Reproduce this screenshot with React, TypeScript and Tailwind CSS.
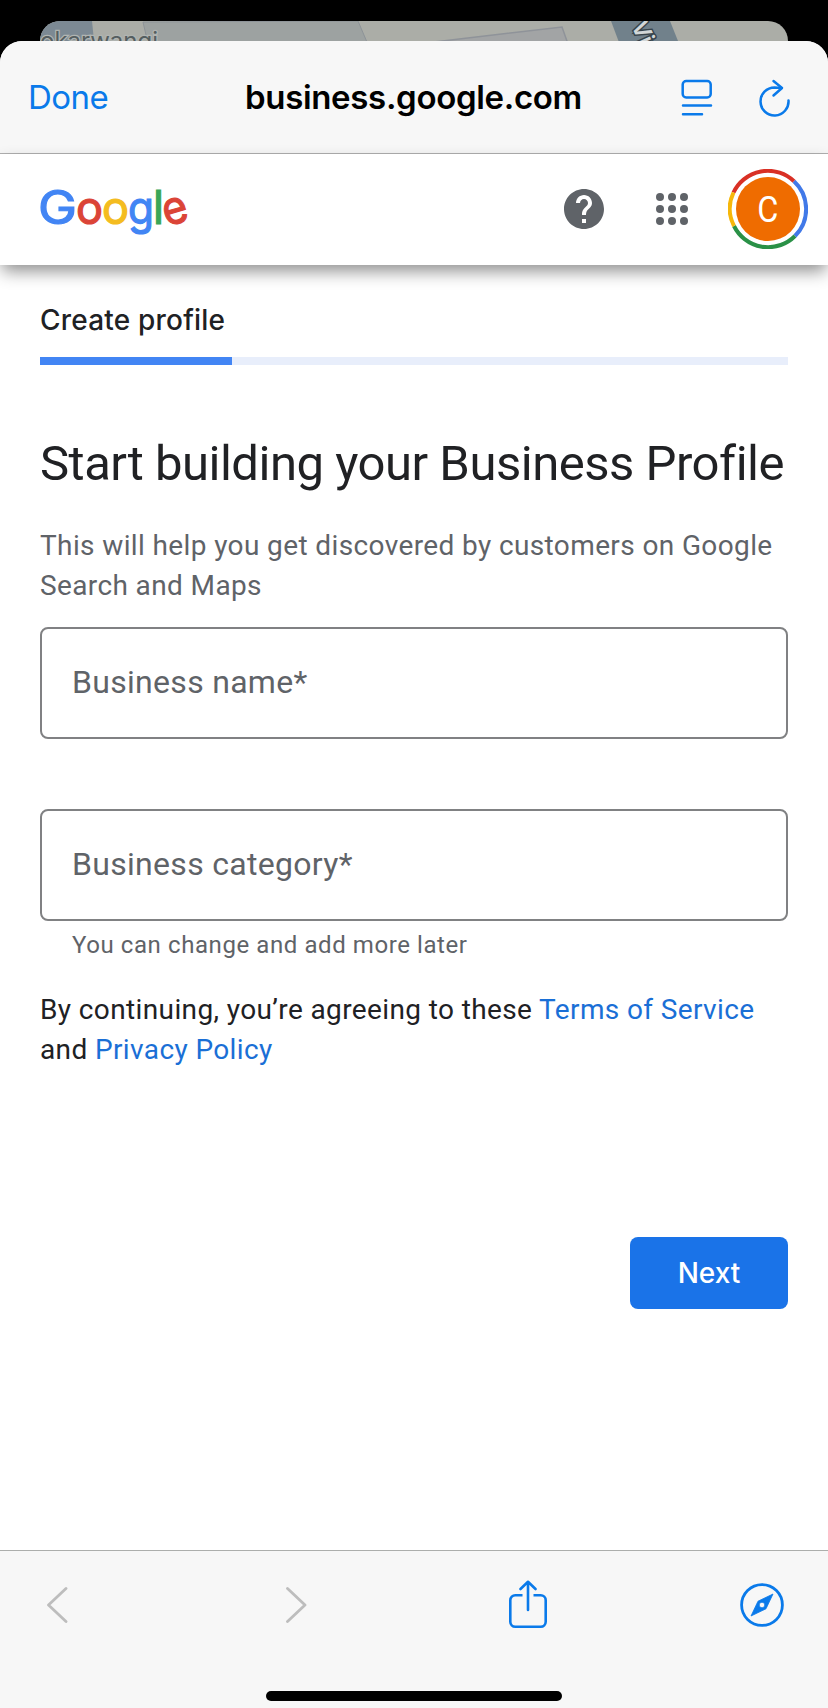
import { useState, type ReactNode } from "react";

const GOOGLE_LETTERS = [
  { char: "G", x: -2, width: 39, fill: "#4285f4" },
  { char: "o", x: 36, width: 27, fill: "#db4437" },
  { char: "o", x: 62, width: 27, fill: "#f4bc20" },
  { char: "g", x: 88, width: 26, fill: "#4285f4" },
  { char: "l", x: 113, width: 11, fill: "#3aa757" },
];

function GoogleLogo() {
  return (
    <svg width="150" height="56" viewBox="0 0 150 56" className="overflow-visible" aria-label="Google">
      <g fontFamily="Inter, sans-serif" fontSize="46" strokeWidth="1.2">
        {GOOGLE_LETTERS.map((letter) => (
          <text
            key={letter.x}
            x={letter.x}
            y="42.5"
            fill={letter.fill}
            stroke={letter.fill}
            textLength={letter.width}
            lengthAdjust="spacingAndGlyphs"
          >
            {letter.char}
          </text>
        ))}
        <text
          x="122.5"
          y="42.5"
          fill="#db4437"
          stroke="#db4437"
          textLength="25"
          lengthAdjust="spacingAndGlyphs"
          transform="rotate(-16 135 30)"
        >
          e
        </text>
      </g>
    </svg>
  );
}

function ReaderIcon() {
  return (
    <svg width="32" height="38" viewBox="0 0 32 38" fill="none" stroke="#0a7aea" strokeWidth="2.5" strokeLinecap="round">
      <rect x="1.7" y="2" width="28" height="16.5" rx="3.5" />
      <path d="M2 26.5h28M2 35.2h19" />
    </svg>
  );
}

function ReloadIcon() {
  return (
    <svg width="32" height="38" viewBox="0 0 32 38" fill="none" stroke="#0a7aea" strokeWidth="2.5" strokeLinecap="round" strokeLinejoin="round">
      <path d="M29.5 21.5A14 14 0 1 1 15.5 8.5L22.5 9" />
      <path d="M14.5 2L23 9L14.5 16.5" />
    </svg>
  );
}

function HelpIcon() {
  return (
    <svg width="48" height="48" viewBox="0 0 24 24" fill="#5f6368">
      <path d="M12 2C6.48 2 2 6.48 2 12s4.48 10 10 10 10-4.48 10-10S17.52 2 12 2zm1 17h-2v-2h2v2zm2.07-7.75l-.9.92C13.45 12.9 13 13.5 13 15h-2v-.5c0-1.1.45-2.1 1.17-2.83l1.24-1.26c.37-.36.59-.86.59-1.41 0-1.1-.9-2-2-2s-2 .9-2 2H8c0-2.21 1.79-4 4-4s4 1.79 4 4c0 .88-.36 1.68-.93 2.25z" />
    </svg>
  );
}

function AppsIcon() {
  return (
    <svg width="32" height="32" viewBox="0 0 32 32" fill="#5f6368">
      {[4, 16, 28].map((cy) => [4, 16, 28].map((cx) => <circle key={cx + "-" + cy} cx={cx} cy={cy} r="4" />))}
    </svg>
  );
}

function Avatar() {
  return (
    <div className="relative flex size-20 items-center justify-center">
      <svg className="absolute inset-0" width="80" height="80" viewBox="0 0 80 80" fill="none" strokeWidth="4">
        <path d="M5.5 23.5A38 38 0 0 1 66 12.3" stroke="#d93025" />
        <path d="M66 12.3A38 38 0 0 1 67 67" stroke="#4179e8" />
        <path d="M67 67A38 38 0 0 1 6 57" stroke="#2a9147" />
        <path d="M6 57A38 38 0 0 1 5.5 23.5" stroke="#f6b70b" />
      </svg>
      <div className="flex size-16 items-center justify-center rounded-full bg-[#ef6c00] pt-0.5 font-[Roboto] text-[36px] leading-none text-white">
        <span className="scale-x-90">C</span>
      </div>
    </div>
  );
}

function ShareIcon() {
  return (
    <svg width="38" height="48" viewBox="0 0 38 48" fill="none" stroke="#0a7aea" strokeWidth="2.6" strokeLinecap="round" strokeLinejoin="round">
      <path d="M13.5 15.2H6.3a5 5 0 0 0-5 5v21.5a5 5 0 0 0 5 5h25.4a5 5 0 0 0 5-5V20.2a5 5 0 0 0-5-5h-7.2" strokeLinecap="butt" />
      <path d="M19 30V1.8M11.5 9L19 1.8L26.5 9" />
    </svg>
  );
}

function CompassIcon() {
  return (
    <svg width="44" height="44" viewBox="0 0 44 44" fill="none">
      <circle cx="22" cy="22" r="20.4" stroke="#0a7aea" strokeWidth="2.8" />
      <path
        d="M33 11L18 18.2L11 33L26 25.8ZM22 19.2a2.8 2.8 0 1 1 0 5.6a2.8 2.8 0 0 1 0-5.6Z"
        fill="#0a7aea"
        fillRule="evenodd"
        stroke="#0a7aea"
        strokeWidth="0.8"
        strokeLinejoin="round"
      />
    </svg>
  );
}

function Chevron({ direction }: { direction: "left" | "right" }) {
  return (
    <svg width="22" height="38" viewBox="0 0 22 38" fill="none" stroke="#bdbdbd" strokeWidth="2.8" strokeLinecap="round" strokeLinejoin="round">
      <path d={direction === "left" ? "M19 2.5L1.5 19L19 35.5" : "M1.5 2.5L19 19L1.5 35.5"} />
    </svg>
  );
}

function MapPeek() {
  return (
    <div className="mx-10 h-10 overflow-hidden rounded-t-[20px]">
      <svg width="748" height="40" viewBox="0 0 748 40">
        <rect width="748" height="40" fill="#abada7" />
        <path d="M0 0H52L56 40H0Z" fill="#7c8993" />
        <path d="M103 1L318 0L335 40H112Z" fill="#9da2a1" stroke="#8d9398" />
        <path d="M360 25L522 6L534 40H360Z" fill="#a2a4a5" stroke="#8f9399" strokeWidth="1.5" />
        <path d="M571 0H630L646 40H586Z" fill="#71818b" />
        <text x="0" y="28" fill="#555e60" stroke="#b0b4b1" strokeWidth="2.5" paintOrder="stroke" fontFamily="Inter, sans-serif" fontSize="24" textLength="118">
          okarwangi
        </text>
        <text transform="translate(591 4) rotate(66)" fill="#d2d7d8" stroke="#38444b" strokeWidth="3" paintOrder="stroke" fontFamily="Inter, sans-serif" fontSize="23" fontWeight="600">
          Vin
        </text>
      </svg>
    </div>
  );
}

function Field({
  label,
  value,
  onChange,
}: {
  label: string;
  value: string;
  onChange: (value: string) => void;
}) {
  return (
    <input
      aria-label={label}
      className="block h-28 w-full rounded-lg border-2 border-[#808183] bg-transparent px-[30px] pb-0.5 text-[32px] tracking-[0.3px] text-[#202124] outline-none placeholder:text-[#5f6368] placeholder:opacity-100 focus:border-[#1a73e8]"
      placeholder={label}
      value={value}
      onChange={(event) => onChange(event.target.value)}
    />
  );
}

function TextLink({ children }: { children: ReactNode }) {
  return (
    <a href="#" className="text-[#1a6fd6]">
      {children}
    </a>
  );
}

export default function App() {
  const [name, setName] = useState("");
  const [category, setCategory] = useState("");

  return (
    <div className="flex h-[1708px] w-[828px] flex-col overflow-hidden bg-black pt-[21px] font-[Roboto,sans-serif]">
      <MapPeek />

      <div className="relative -mt-5 flex flex-1 flex-col overflow-hidden rounded-t-[22px] bg-white">
        <div className="flex h-[113px] shrink-0 items-center border-b border-[#b0b0b0] bg-[#f7f7f7] px-7 pt-0.5 font-[Inter,sans-serif] text-[33px]">
          <button className="w-[217px] text-left tracking-[-0.5px] text-[#0a7aea]">Done</button>
          <span className="flex-1 font-semibold tracking-[-0.33px] whitespace-nowrap text-black">business.google.com</span>
          <div className="flex items-center gap-[46px] pr-[9px]">
            <ReaderIcon />
            <ReloadIcon />
          </div>
        </div>

        <header className="relative flex h-[111px] shrink-0 items-center bg-white pb-0.5 pl-10 shadow-[0_8px_16px_-2px_rgba(0,0,0,0.45)]">
          <GoogleLogo />
          <div className="ml-auto flex items-center pr-5">
            <HelpIcon />
            <span className="mr-10 ml-12">
              <AppsIcon />
            </span>
            <Avatar />
          </div>
        </header>

        <main className="flex flex-1 flex-col px-10 pt-[35px]">
          <p className="font-[Inter,sans-serif] text-[28px] leading-10 font-medium tracking-[0.2px] text-[#202124]">
            Create profile
          </p>
          <div className="mt-[17px] h-2 bg-[#e8eefb]">
            <div className="h-full w-48 bg-[#4285f4]"></div>
          </div>

          <h1 className="mt-[67px] text-[49px] leading-16 tracking-[-0.48px] whitespace-nowrap text-[#202124]">
            Start building your Business Profile
          </h1>
          <p className="mt-[30px] text-[28px] leading-10 tracking-[0.38px] text-[#5f6368]">
            This will help you get discovered by customers on Google Search and Maps
          </p>

          <div className="mt-[21px]">
            <Field label="Business name*" value={name} onChange={setName} />
          </div>
          <div className="mt-[70px]">
            <Field label="Business category*" value={category} onChange={setCategory} />
            <p className="mt-2 pl-8 text-[24px] leading-8 tracking-[0.58px] text-[#5f6368]">You can change and add more later</p>
          </div>

          <p className="mt-[29px] text-[28px] leading-10 tracking-[0.38px] text-[#202124]">
            By continuing, you’re agreeing to these <TextLink>Terms of Service</TextLink> and{" "}
            <TextLink>Privacy Policy</TextLink>
          </p>

          <button className="mt-[167px] h-18 w-[158px] self-end rounded-lg bg-[#1a73e8] font-[Inter,sans-serif] text-[28px] font-medium text-white">
            Next
          </button>
        </main>

        <footer className="flex h-[158px] shrink-0 flex-col items-center justify-between border-t border-[#acaeac] bg-[#f7f7f7] pt-7 pb-[7px]">
          <div className="flex h-[52px] w-full items-center pl-[47px]">
            <Chevron direction="left" />
            <span className="ml-[217px]">
              <Chevron direction="right" />
            </span>
            <span className="mr-[193px] mb-0.5 ml-[201px]">
              <ShareIcon />
            </span>
            <CompassIcon />
          </div>
          <div className="h-2.5 w-[296px] rounded-full bg-black"></div>
        </footer>
      </div>
    </div>
  );
}
